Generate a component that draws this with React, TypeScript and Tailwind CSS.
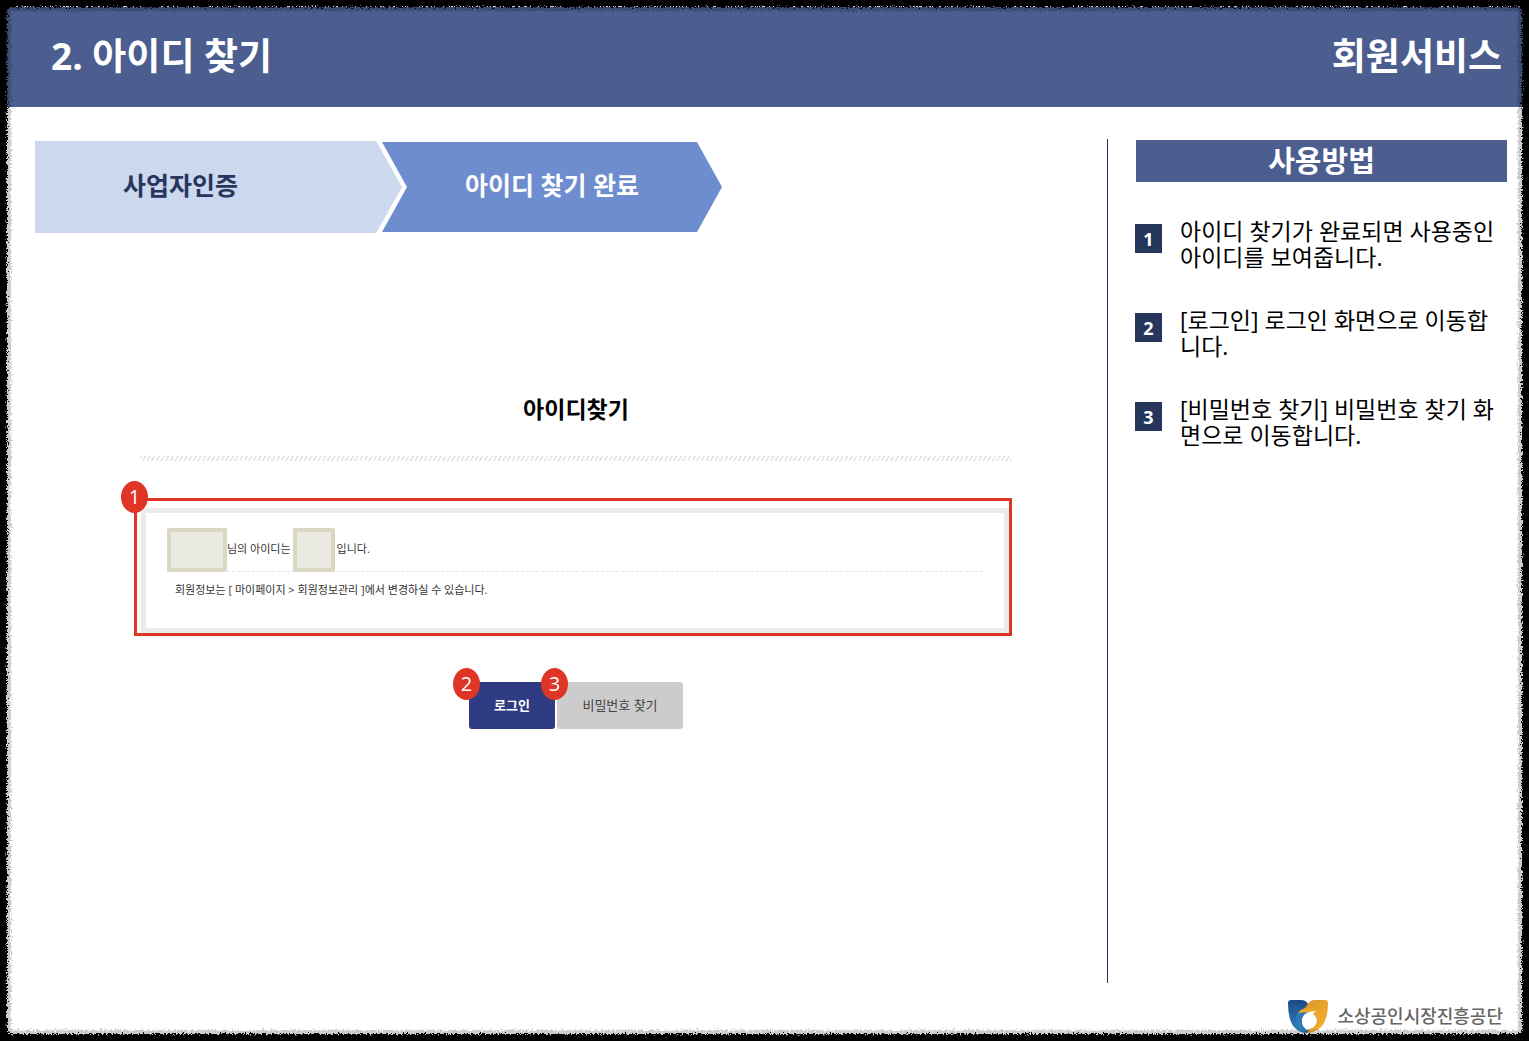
import type { ReactNode } from 'react';

interface Guide {
  id: number;
  text: string;
}

const guides: Guide[] = [
  { id: 1, text: '아이디 찾기가 완료되면 사용중인 아이디를 보여줍니다.' },
  { id: 2, text: '[로그인] 로그인 화면으로 이동합니다.' },
  { id: 3, text: '[비밀번호 찾기] 비밀번호 찾기 화면으로 이동합니다.' }
];

function Marker({ children }: { children: ReactNode }) {
  return (
    <span className="absolute -left-4 -top-[14px] flex h-8 w-[27px] items-center justify-center rounded-[50%] bg-[#df3526] text-xl font-normal leading-none text-white">
      {children}
    </span>
  );
}

function Logo() {
  return (
    <svg viewBox="0 0 42 36" className="h-9 w-[42px]" aria-hidden="true">
      <defs>
        <linearGradient id="logoBlue" x1="0" y1="0" x2="0" y2="1">
          <stop offset="0" stopColor="#1c4a80" />
          <stop offset="1" stopColor="#3187c4" />
        </linearGradient>
        <linearGradient id="logoGold" x1="0" y1="0" x2="1" y2="1">
          <stop offset="0" stopColor="#d98e2b" />
          <stop offset="1" stopColor="#f6b92e" />
        </linearGradient>
      </defs>
      <path
        d="M1 5Q1 2 4 2H14Q19 2 21 6L24 20L20 35Q12 35 7 29Q1 22 1 5Z"
        fill="url(#logoBlue)"
      />
      <path
        d="M11 15Q17 12 21 6Q23 2 28 2H38Q41 2 41 5Q41 21 35 28Q29 35 19 35L24 18Z"
        fill="url(#logoGold)"
      />
      <path d="M11 15Q7 20 9 26Q12 33 20 35L24 30L25 14Z" fill="#2e7ab8" />
      <path d="M11 15Q13 11 20 10Q33 11 34 20Q33 31 20 35L25 26L24 14Q17 13 11 15Z" fill="#eba62f" />
      <path d="M29 13Q17 13 15 21Q14 28 20 32Q29 30 30 23Q30 19 26 16Q27 14 29 13Z" fill="#fff" />
    </svg>
  );
}

// Rough dark edge around the slide
function RoughFrame() {
  return (
    <svg className="pointer-events-none absolute inset-0 h-full w-full" aria-hidden="true">
      <filter id="rough" x="0" y="0" width="100%" height="100%">
        <feTurbulence type="fractalNoise" baseFrequency="0.6" numOctaves="2" seed="4" result="noise" />
        <feDisplacementMap
          in="SourceGraphic"
          in2="noise"
          scale="7"
          xChannelSelector="R"
          yChannelSelector="G"
        />
        <feGaussianBlur stdDeviation="0.5" />
      </filter>
      <g filter="url(#rough)" fill="none" stroke="#000">
        <rect width="100%" height="100%" rx="12" strokeOpacity="0.2" strokeWidth="22" />
        <rect width="100%" height="100%" rx="12" strokeWidth="14" />
      </g>
      <rect width="100%" height="100%" fill="none" stroke="#000" strokeWidth="11" />
    </svg>
  );
}

export default function App() {
  return (
    <div className="relative flex min-h-screen flex-col bg-white px-[6px] py-[7px] font-['Open_Sans','Noto_Sans_CJK_KR',sans-serif] text-black">
      <header className="flex h-[100px] items-center justify-between bg-[#4b5e8f] pb-1 pl-[45px] pr-[21px] text-[37px] font-bold leading-none text-white">
        <h1>2. 아이디 찾기</h1>
        <p>회원서비스</p>
      </header>

      <div className="flex flex-1 pl-[29px] pr-4 pt-8">
        <main className="min-w-0 flex-1 pt-[2px]">
          <ol className="flex items-center text-[25px] font-bold">
            <li className="flex h-[92px] w-[367px] items-center justify-center bg-[#ccd8ee] pb-[2px] pr-[76px] text-[#27365d] [clip-path:polygon(0_0,calc(100%-26px)_0,100%_50%,calc(100%-26px)_100%,0_100%)]">
              사업자인증
            </li>
            <li className="-ml-5 flex h-[90px] w-[340px] items-center justify-center bg-[#6d8dce] pb-[2px] text-white [clip-path:polygon(0_0,calc(100%-25px)_0,100%_50%,calc(100%-25px)_100%,0_100%,25px_50%)]">
              아이디 찾기 완료
            </li>
          </ol>

          <section className="ml-[105px] mr-[95px] mt-[160px]">
            <h2 className="text-center text-[23px] font-bold leading-8">아이디찾기</h2>
            <div className="mt-[31px] h-[5px] bg-[repeating-linear-gradient(120deg,#e2e2e2_0_1px,#fff_2px_4px)]" />

            <div className="-ml-[6px] mt-[37px] border-3 border-[#df3526] pl-1">
              <div className="relative">
                <span className="absolute -left-1 -top-[6px]">
                  <Marker>1</Marker>
                </span>
              </div>
              <div className="mt-[7px] h-[125px] border-5 border-[#ebebeb] px-[21px] pt-[15px] text-[11px] text-[#333]">
                <p className="flex h-11 items-center border-b border-dashed border-[#e4e4e4]">
                  <span className="h-11 w-[60px] rounded-xs border-4 border-[#dad8c3] bg-[#ebebe3]" />
                  님의 아이디는
                  <span className="mx-[2px] h-11 w-[42px] rounded-xs border-4 border-[#dad8c3] bg-[#ebebe3]" />
                  입니다.
                </p>
                <p className="mt-[10px] pl-2 leading-4">
                  회원정보는 [ 마이페이지 &gt; 회원정보관리 ]에서 변경하실 수 있습니다.
                </p>
              </div>
            </div>

            <div className="mt-[46px] flex justify-center gap-[2px]">
              <button
                type="button"
                className="relative h-[47px] w-[86px] rounded-[3px] bg-[#2f3b82] text-[13px] font-bold text-white"
              >
                <Marker>2</Marker>
                로그인
              </button>
              <button
                type="button"
                className="relative h-[47px] w-[126px] rounded-[3px] bg-[#ccc] text-[13px] text-[#444]"
              >
                <Marker>3</Marker>
                비밀번호 찾기
              </button>
            </div>
          </section>
        </main>

        <aside className="w-[400px] border-l border-[#27365d] pl-[27px] pt-px">
          <h2 className="ml-px flex h-[42px] items-center justify-center bg-[#4b5e8f] pb-[2px] text-[29px] font-bold leading-none text-white">
            사용방법
          </h2>
          <ol className="mt-9 flex flex-col gap-[37px]">
            {guides.map((guide) => (
              <li key={guide.id} className="flex gap-[18px] pr-2">
                <span className="mt-[6px] flex h-[29px] w-[27px] shrink-0 items-center justify-center bg-[#27365d] text-lg font-bold text-white">
                  {guide.id}
                </span>
                <p className="text-[23px] leading-[26px]">{guide.text}</p>
              </li>
            ))}
          </ol>
        </aside>
      </div>

      <footer className="flex h-[51px] items-end justify-end gap-2 pr-[20px]">
        <Logo />
        <p className="text-lg font-medium leading-9 text-[#666]">소상공인시장진흥공단</p>
      </footer>

      <RoughFrame />
    </div>
  );
}
